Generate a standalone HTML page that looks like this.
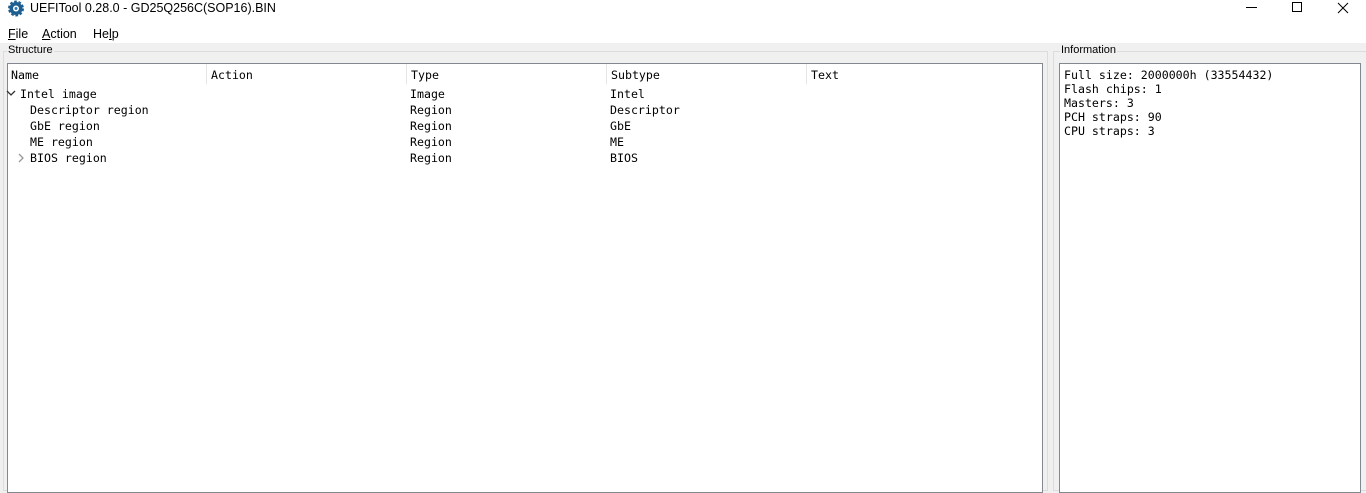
<!DOCTYPE html>
<html><head><style>
*{margin:0;padding:0;box-sizing:border-box}
body{width:1366px;height:487px;overflow:hidden;background:#f0f0f0;font-family:"Liberation Sans",sans-serif;font-size:12px;color:#000;position:relative}
.a{position:absolute;white-space:pre}
.m{font-family:"DejaVu Sans Mono","Liberation Mono",monospace;font-size:11.6px;line-height:16px}
</style></head><body>
<div class="a" style="left:0;top:0;width:1366px;height:43px;background:#fff"></div>
<svg class="a" style="left:7px;top:0" width="18" height="17" viewBox="0 0 18 17"><circle cx="9" cy="8.5" r="6.5" fill="#1f5f8f" stroke="#1f5f8f" stroke-width="3" stroke-dasharray="2.5 1.6"/><circle cx="9" cy="8.5" r="3" fill="#fff"/><circle cx="9" cy="8.5" r="1.5" fill="#2a7ab8"/></svg>
<div class="a" style="left:30px;top:0;font-size:12.5px;line-height:16px">UEFITool 0.28.0 - GD25Q256C(SOP16).BIN</div>
<div class="a" style="left:1246px;top:7px;width:11px;height:1px;background:#000"></div>
<div class="a" style="left:1292px;top:2px;width:10px;height:10px;border:1px solid #000"></div>
<svg class="a" style="left:1337px;top:2px" width="12" height="12"><path d="M1 1 L11 11 M11 1 L1 11" stroke="#000" stroke-width="1"/></svg>
<div class="a" style="left:8px;top:27px;font-size:12.5px"><u>F</u>ile</div>
<div class="a" style="left:42px;top:27px;font-size:12.5px"><u>A</u>ction</div>
<div class="a" style="left:93px;top:27px;font-size:12.5px">He<u>l</u>p</div>
<div class="a" style="left:3px;top:51px;width:1045px;height:440px;border:1px solid #dcdcdc"></div>
<div class="a" style="left:7px;top:44px;background:#f0f0f0;padding:0 1px;font-size:11px">Structure</div>
<div class="a" style="left:1053px;top:51px;width:320px;height:440px;border:1px solid #dcdcdc"></div>
<div class="a" style="left:1060px;top:44px;background:#f0f0f0;padding:0 1px;font-size:11px">Information</div>
<div class="a" style="left:7px;top:63px;width:1036px;height:430px;background:#fff;border:1px solid #828790"></div>
<div class="a" style="left:206px;top:64px;width:1px;height:20px;background:#e5e5e5"></div>
<div class="a" style="left:406px;top:64px;width:1px;height:20px;background:#e5e5e5"></div>
<div class="a" style="left:606px;top:64px;width:1px;height:20px;background:#e5e5e5"></div>
<div class="a" style="left:806px;top:64px;width:1px;height:20px;background:#e5e5e5"></div>
<div class="a m" style="left:11px;top:67px">Name</div>
<div class="a m" style="left:211px;top:67px">Action</div>
<div class="a m" style="left:411px;top:67px">Type</div>
<div class="a m" style="left:611px;top:67px">Subtype</div>
<div class="a m" style="left:811px;top:67px">Text</div>
<svg class="a" style="left:6px;top:89px" width="10" height="8"><path d="M1 2 L5 6 L9 2" fill="none" stroke="#333" stroke-width="1.3"/></svg>
<svg class="a" style="left:17px;top:153px" width="8" height="10"><path d="M2 1 L6 5 L2 9" fill="none" stroke="#999" stroke-width="1.3"/></svg>
<div class="a m" style="left:20px;top:86px">Intel image</div>
<div class="a m" style="left:30px;top:102px">Descriptor region
GbE region
ME region
BIOS region</div>
<div class="a m" style="left:410px;top:86px">Image
Region
Region
Region
Region</div>
<div class="a m" style="left:610px;top:86px">Intel
Descriptor
GbE
ME
BIOS</div>
<div class="a" style="left:1059px;top:63px;width:302px;height:430px;background:#fff;border:1px solid #828790"></div>
<div class="a m" style="left:1064px;top:68px;line-height:14px">Full size: 2000000h (33554432)
Flash chips: 1
Masters: 3
PCH straps: 90
CPU straps: 3</div>
</body></html>
